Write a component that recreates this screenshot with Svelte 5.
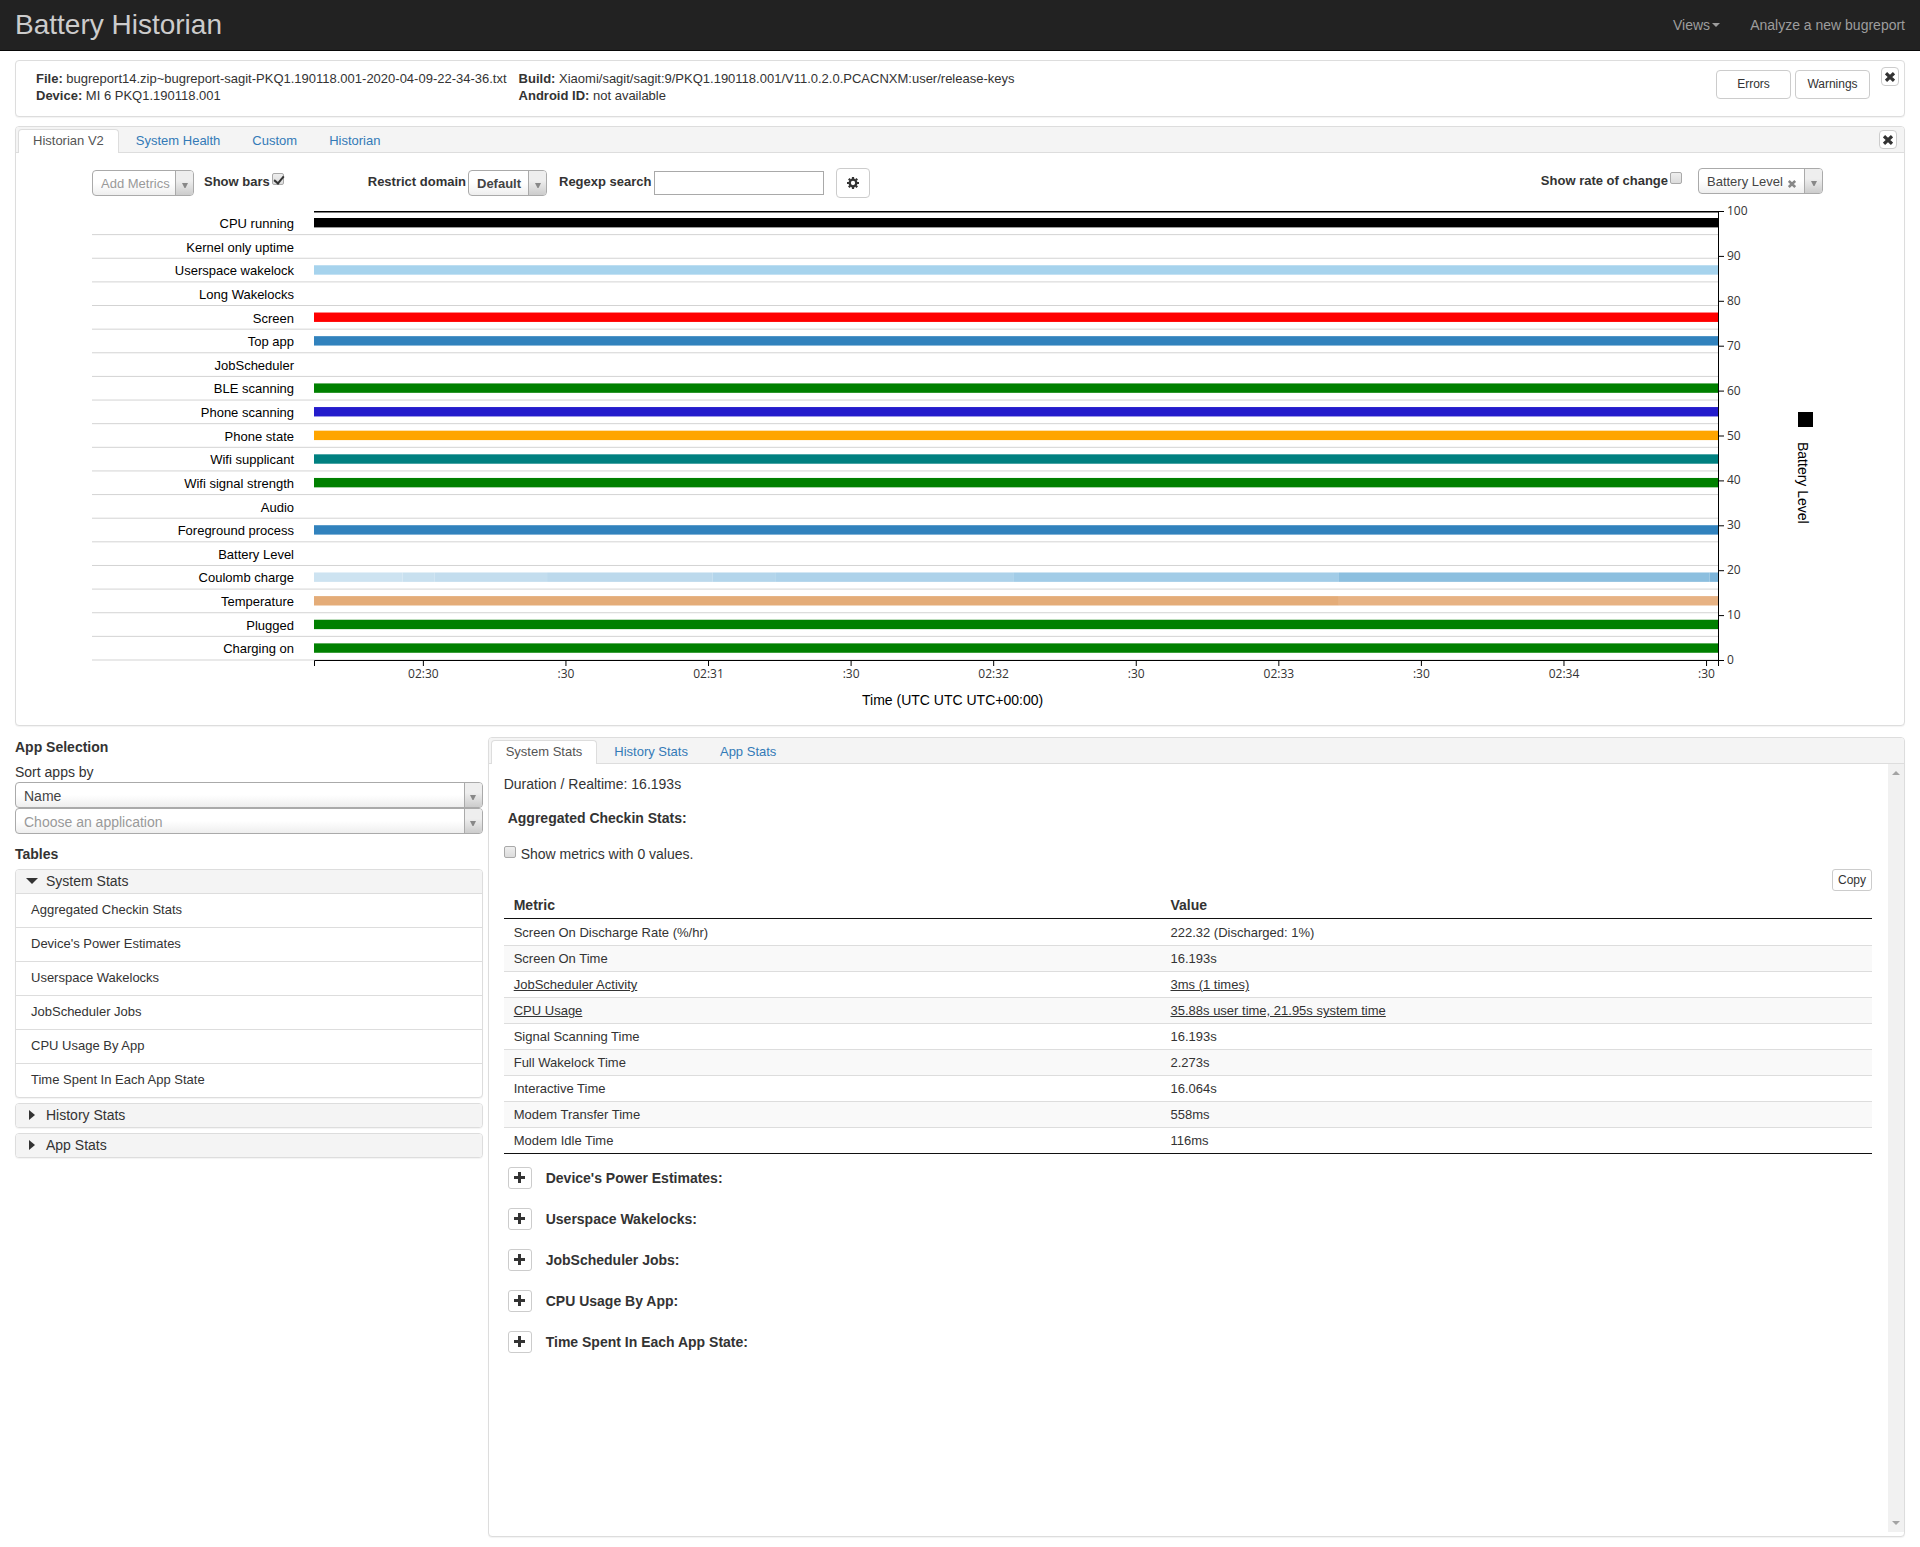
<script>
    let chartWidth = $state(1812);
    let showBars = $state(true);
    let showRate = $state(false);
    let showZero = $state(false);
    let regexp = $state('');
    let openGroup = $state('System Stats');

    const mainTabs = ['Historian V2', 'System Health', 'Custom', 'Historian'];
    const statTabs = ['System Stats', 'History Stats', 'App Stats'];

    // each segment is [start fraction, color]
    const rows = [
        { name: 'CPU running', segments: [[0, '#000']] },
        { name: 'Kernel only uptime', segments: [] },
        { name: 'Userspace wakelock', segments: [[0, '#a6d3ed']] },
        { name: 'Long Wakelocks', segments: [] },
        { name: 'Screen', segments: [[0, '#f00']] },
        { name: 'Top app', segments: [[0, '#3182bd']] },
        { name: 'JobScheduler', segments: [] },
        { name: 'BLE scanning', segments: [[0, 'green']] },
        { name: 'Phone scanning', segments: [[0, '#241ccc']] },
        { name: 'Phone state', segments: [[0, 'orange']] },
        { name: 'Wifi supplicant', segments: [[0, 'teal']] },
        { name: 'Wifi signal strength', segments: [[0, 'green']] },
        { name: 'Audio', segments: [] },
        { name: 'Foreground process', segments: [[0, '#3182bd']] },
        { name: 'Battery Level', segments: [] },
        { name: 'Coulomb charge', segments: [
            [0, '#cde3f1'], [0.063, '#c8e0ef'], [0.086, '#c3ddee'], [0.166, '#bcd9ec'],
            [0.284, '#b3d5eb'], [0.329, '#add2ea'], [0.498, '#a2cce7'], [0.73, '#8cbfdf'], [0.994, '#7cb4d9'],
        ] },
        { name: 'Temperature', segments: [[0, '#e4ac78'], [0.73, '#e7b283']] },
        { name: 'Plugged', segments: [[0, 'green']] },
        { name: 'Charging on', segments: [[0, 'green']] },
    ];
    const levels = [0, 10, 20, 30, 40, 50, 60, 70, 80, 90, 100];
    const times = ['02:30', ':30', '02:31', ':30', '02:32', ':30', '02:33', ':30', '02:34', ':30'];

    const left = 222;
    const top = 13;
    const plotHeight = 449;
    const rowHeight = plotHeight / rows.length;
    let right = $derived(chartWidth - 186);
    let plotWidth = $derived(right - left);

    const levelY = (level) => top + plotHeight * (1 - level / 100);
    const timeX = (i) => left + plotWidth * (0.0779 + i * 0.10155);
    const segmentEnd = (segments, i) => i + 1 < segments.length ? segments[i + 1][0] : 1;

    const tables = [
        { name: 'System Stats', items: ['Aggregated Checkin Stats', "Device's Power Estimates", 'Userspace Wakelocks',
            'JobScheduler Jobs', 'CPU Usage By App', 'Time Spent In Each App State'] },
        { name: 'History Stats', items: [] },
        { name: 'App Stats', items: [] },
    ];

    const metrics = [
        { name: 'Screen On Discharge Rate (%/hr)', value: '222.32 (Discharged: 1%)' },
        { name: 'Screen On Time', value: '16.193s' },
        { name: 'JobScheduler Activity', value: '3ms (1 times)', link: true },
        { name: 'CPU Usage', value: '35.88s user time, 21.95s system time', link: true },
        { name: 'Signal Scanning Time', value: '16.193s' },
        { name: 'Full Wakelock Time', value: '2.273s' },
        { name: 'Interactive Time', value: '16.064s' },
        { name: 'Modem Transfer Time', value: '558ms' },
        { name: 'Modem Idle Time', value: '116ms' },
    ];
    const sections = ["Device's Power Estimates:", 'Userspace Wakelocks:', 'JobScheduler Jobs:', 'CPU Usage By App:',
        'Time Spent In Each App State:'];
</script>

{#snippet cross(size)}
    <svg width={size} height={size} viewBox="0 0 10 10" aria-hidden="true">
        <path d="M1 1.2L9 8.8M9 1.2L1 8.8" stroke="currentColor" stroke-width="3.2" />
    </svg>
{/snippet}

{#snippet arrow()}
    <span class="arrow">
        <svg width="6" height="5" viewBox="0 0 6 5" aria-hidden="true"><path d="M0 0H6L3.5 5H2.5Z" fill="#888" /></svg>
    </span>
{/snippet}

{#snippet tabBar(tabs)}
    <nav class="tabs">
        {#each tabs as tab, i}
            <a href="#{tab}" class:active={i === 0}>{tab}</a>
        {/each}
    </nav>
{/snippet}

<div class="page">
    <header class="navbar">
        <a class="brand" href="#top">Battery Historian</a>
        <nav>
            <button class="views">Views<span class="caret"></span></button>
            <a href="#upload">Analyze a new bugreport</a>
        </nav>
    </header>

    <main>
        <section class="panel info">
            <div class="info-text">
                <div><b>File:</b> bugreport14.zip~bugreport-sagit-PKQ1.190118.001-2020-04-09-22-34-36.txt</div>
                <div><b>Device:</b> MI 6 PKQ1.190118.001</div>
            </div>
            <div class="info-text">
                <div><b>Build:</b> Xiaomi/sagit/sagit:9/PKQ1.190118.001/V11.0.2.0.PCACNXM:user/release-keys</div>
                <div><b>Android ID:</b> not available</div>
            </div>
            <div class="info-buttons">
                <button class="btn wide">Errors</button>
                <button class="btn wide">Warnings</button>
            </div>
            <button class="btn close" aria-label="Close">{@render cross(10)}</button>
        </section>

        <section class="panel">
            <div class="panel-head">
                {@render tabBar(mainTabs)}
                <button class="btn close" aria-label="Close">{@render cross(10)}</button>
            </div>

            <div class="controls">
                <span class="select metrics">
                    <select class="placeholder" aria-label="Add Metrics"><option>Add Metrics</option></select>
                    {@render arrow()}
                </span>
                <label class="bars">Show bars <input type="checkbox" bind:checked={showBars}></label>
                <label for="domain">Restrict domain</label>
                <span class="select domain">
                    <select id="domain"><option>Default</option></select>
                    {@render arrow()}
                </span>
                <label for="regexp">Regexp search</label>
                <input id="regexp" type="text" bind:value={regexp}>
                <button class="btn gear" aria-label="Settings">
                    <svg width="12" height="12" viewBox="0 0 12 12" fill="none" stroke="currentColor" aria-hidden="true">
                        <circle cx="6" cy="6" r="3.3" stroke-width="2.3" />
                        <path d="M6 0V2M6 10V12M0 6H2M10 6H12M1.8 1.8L3.1 3.1M8.9 8.9L10.2 10.2M10.2 1.8L8.9 3.1M3.1 8.9L1.8 10.2" stroke-width="2.2" />
                    </svg>
                </button>
                <div class="controls-right">
                    <label>Show rate of change <input type="checkbox" bind:checked={showRate}></label>
                    <span class="select level">
                        <select aria-label="Level metric"><option>Battery Level</option></select>
                        <button class="clear" aria-label="Clear">{@render cross(8)}</button>
                        {@render arrow()}
                    </span>
                </div>
            </div>

            <div class="chart" bind:clientWidth={chartWidth}>
                <svg width={chartWidth} height="527">
                    {#each rows as row, i}
                        {@const y = top + i * rowHeight}
                        <line x1="0" x2={right} y1={y + rowHeight} y2={y + rowHeight} stroke="#d3d3d3" />
                        <text class="row-label" x={left - 20} y={y + 17}>{row.name}</text>
                        {#if showBars}
                            {#each row.segments as [start, color], s}
                                <rect x={left + start * plotWidth} y={y + 7} height="9.4" fill={color}
                                    width={(segmentEnd(row.segments, s) - start) * plotWidth} />
                            {/each}
                        {/if}
                    {/each}

                    <!-- battery level stays at 100 for the whole report -->
                    <rect x={left} y={top} width={plotWidth} height="1.5" />
                    <path class="axis" d="M{right + 0.5} {top}V{top + plotHeight + 6}" />
                    <path class="axis" d="M{left + 0.5} {top + plotHeight + 6}V{top + plotHeight + 0.5}H{right + 6}" />
                    {#each levels as level}
                        <line class="axis" x1={right} x2={right + 6} y1={levelY(level) + 0.5} y2={levelY(level) + 0.5} />
                        <text class="tick" x={right + 9} y={levelY(level) + 4}>{level}</text>
                    {/each}
                    {#each times as time, i}
                        <line class="axis" x1={timeX(i)} x2={timeX(i)} y1={top + plotHeight} y2={top + plotHeight + 6} />
                        <text class="tick time" x={timeX(i)} y={top + plotHeight + 18}>{time}</text>
                    {/each}

                    <text class="title" x={left + plotWidth / 2 - 154} y="507">Time (UTC UTC UTC+00:00)</text>
                    <rect x={right + 80} y="214" width="15" height="15" />
                    <text class="title" transform="translate({right + 80} 244) rotate(90)">Battery Level</text>
                </svg>
            </div>
        </section>

        <div class="columns">
            <aside>
                <h4>App Selection</h4>
                <label class="sort" for="sort">Sort apps by</label>
                <span class="select full">
                    <select id="sort"><option>Name</option></select>
                    {@render arrow()}
                </span>
                <span class="select full">
                    <select class="placeholder" aria-label="Application"><option>Choose an application</option></select>
                    {@render arrow()}
                </span>

                <h4 class="tables-title">Tables</h4>
                {#each tables as group}
                    <div class="panel group">
                        <button class="group-head" onclick={() => openGroup = group.name}>
                            <svg width="12" height="12" viewBox="0 0 12 12" fill="currentColor" aria-hidden="true">
                                <path d={openGroup === group.name ? 'M0 3H12L6 9Z' : 'M3 1L9 6L3 11Z'} />
                            </svg>
                            {group.name}
                        </button>
                        {#if openGroup === group.name}
                            {#each group.items as item}
                                <a href="#{item}">{item}</a>
                            {/each}
                        {/if}
                    </div>
                {/each}
            </aside>

            <section class="panel stats">
                <div class="panel-head">{@render tabBar(statTabs)}</div>
                <div class="stats-body">
                    <div class="stats-content">
                        <div>Duration / Realtime: 16.193s</div>
                        <h4 class="checkin">Aggregated Checkin Stats:</h4>
                        <label class="zero"><input type="checkbox" bind:checked={showZero}>Show metrics with 0 values.</label>
                        <button class="btn copy">Copy</button>
                        <table>
                            <thead>
                                <tr><th>Metric</th><th>Value</th></tr>
                            </thead>
                            <tbody>
                                {#each metrics as metric}
                                    <tr class:link={metric.link}><td>{metric.name}</td><td>{metric.value}</td></tr>
                                {/each}
                            </tbody>
                        </table>
                        <div class="sections">
                            {#each sections as section}
                                <div>
                                    <button class="btn plus" aria-label="Expand {section}">
                                        <svg width="12" height="12" viewBox="0 0 12 12" aria-hidden="true">
                                            <path d="M5.5 0V11M0 5.5H11" stroke="currentColor" stroke-width="3" />
                                        </svg>
                                    </button>
                                    <h4>{section}</h4>
                                </div>
                            {/each}
                        </div>
                    </div>
                    <div class="scrollbar">
                        <button aria-label="Scroll up"><svg width="8" height="4"><path d="M0 4H8L4 0Z" fill="#a3a3a3" /></svg></button>
                        <button aria-label="Scroll down"><svg width="8" height="4"><path d="M0 0H8L4 4Z" fill="#a3a3a3" /></svg></button>
                    </div>
                </div>
            </section>
        </div>
    </main>
</div>

<style>
    :global(body) { margin: 0; background: #fff; }

    .page {
        min-height: 100vh; display: flex; flex-direction: column; color: #333;
        font: 14px/20px "Liberation Sans", Arial, sans-serif;
    }
    .page, .page :global(*) { box-sizing: border-box; }
    a { color: inherit; text-decoration: none; }
    button, input, select { font: inherit; color: inherit; }
    button { padding: 0; border: 0; background: none; cursor: pointer; }
    svg { display: block; flex: none; }
    h4 { margin: 0; font-size: 14px; font-weight: bold; }

    .navbar {
        height: 51px; padding: 0 15px; background: #222; border-bottom: 1px solid #080808; color: #9d9d9d;
        display: flex; justify-content: space-between; align-items: center;
    }
    .brand { font-size: 28px; line-height: 32px; color: #ccc; }
    .navbar nav { display: flex; gap: 30px; }
    .views { display: flex; align-items: center; gap: 2px; }
    .caret { border: 4px solid transparent; border-top-color: currentColor; border-bottom: 0; }

    main { flex: 1; display: flex; flex-direction: column; padding: 9px 15px 10px; }
    .panel { border: 1px solid #ddd; border-radius: 4px; background: #fff; box-shadow: 0 1px 1px rgba(0, 0, 0, 0.05); }
    .btn {
        display: flex; align-items: center; justify-content: center; background: #fff;
        border: 1px solid #ccc; border-radius: 4px; font-size: 12px; line-height: 17px;
    }
    .close { width: 18px; height: 19px; }

    .info { display: flex; align-items: flex-start; padding: 6px 5px 12px 20px; margin-bottom: 9px; font-size: 13px; line-height: 17px; }
    .info-text { margin: 3px 12px 0 0; }
    .info-buttons { display: flex; gap: 4px; margin: 3px 11px 0 auto; }
    .wide { width: 75px; height: 29px; }

    .panel-head {
        display: flex; justify-content: space-between; align-items: center; height: 26px; padding: 0 7px 0 2px;
        background: #f4f4f4; border-bottom: 1px solid #ddd; border-radius: 3px 3px 0 0;
    }
    .tabs { align-self: flex-end; display: flex; gap: 2px; margin-bottom: -1px; font-size: 13px; line-height: 17px; }
    .tabs a { padding: 2px 14px 4px; border: 1px solid transparent; border-bottom: 0; border-radius: 4px 4px 0 0; color: #337ab7; }
    .tabs a.active { background: #fff; border-color: #ddd; color: #555; }

    .controls { display: flex; align-items: center; height: 45px; padding: 15px 81px 0 76px; font-size: 13px; font-weight: bold; }
    .controls label { display: flex; gap: 2px; padding-bottom: 3px; line-height: 17px; }
    .controls label[for] { margin-right: 2px; }
    .controls .bars { margin: 0 84px 0 10px; }
    .controls-right { margin-left: auto; display: flex; gap: 16px; height: 30px; }
    .controls-right label { padding-top: 4px; }

    .select {
        display: flex; height: 26px; border: 1px solid #aaa; border-radius: 4px; overflow: hidden;
        background: linear-gradient(to top, #eee 0%, #fff 50%); color: #444;
    }
    select { appearance: none; flex: 1; min-width: 0; padding: 2px 0 0 8px; border: 0; background: none; outline: 0; }
    .placeholder { color: #999; }
    .arrow {
        width: 18px; border-left: 1px solid #aaa; background: linear-gradient(to top, #ccc 0%, #eee 60%);
        display: flex; align-items: center; justify-content: center; padding-top: 4px; pointer-events: none;
    }
    .metrics { width: 102px; font-weight: normal; }
    .domain { width: 79px; margin-right: 12px; }
    .level { width: 125px; font-weight: normal; }
    .clear { padding: 5px 8px 0 0; color: #888; }
    .full { width: 100%; }

    input[type="text"] { width: 170px; height: 24px; padding: 0 4px; border: 1px solid #a9a9a9; margin-right: 12px; }
    input[type="checkbox"] {
        appearance: none; width: 12px; height: 12px; margin: 0; border: 1px solid #a9a9a9; border-radius: 2px;
        background: linear-gradient(#eee, #dcdcdc); position: relative;
    }
    input[type="checkbox"]:checked::after {
        content: ""; position: absolute; left: 3px; top: 0; width: 4px; height: 8px;
        border: solid #333; border-width: 0 2px 2px 0; transform: rotate(40deg);
    }
    .gear { width: 34px; height: 30px; }

    .chart { margin-left: 76px; overflow: hidden; }
    .row-label { font-size: 13px; text-anchor: end; fill: #000; }
    .tick { font: 12px "Open Sans", sans-serif; fill: #333; }
    .time { text-anchor: middle; }
    .title { font-size: 14px; fill: #000; }
    .axis { fill: none; stroke: #000; }

    .columns { flex: 1; display: grid; grid-template-columns: minmax(0, 33fr) minmax(0, 100fr); gap: 5px; margin-top: 11px; }
    .sort { display: block; margin-top: 5px; }
    .tables-title { margin: 10px 0 5px; }
    .group { margin-bottom: 5px; overflow: hidden; font-size: 13px; line-height: 17px; }
    .group-head {
        display: flex; align-items: center; gap: 8px; width: 100%; height: 23px; padding: 0 10px 2px;
        background: #f4f4f4; font-size: 14px; line-height: 20px;
    }
    .group a { display: block; padding: 7px 15px 9px; border-top: 1px solid #ddd; }

    .stats { display: flex; flex-direction: column; }
    .stats-body { flex: 1; display: flex; padding-bottom: 4px; }
    .stats-content { flex: 1; padding: 10px 16px 20px 15px; }
    .checkin { margin: 14px 4px 16px; }
    .zero { display: flex; gap: 5px; }
    .zero input { margin-top: 2px; }
    .copy { width: 40px; height: 22px; margin: 5px 0 0 auto; border-radius: 3px; }

    table { width: 100%; border-collapse: separate; border-spacing: 0; border-bottom: 1px solid #111; font-size: 13px; line-height: 17px; }
    th, td { padding: 4px 10px; text-align: left; }
    th { padding-bottom: 3px; border-bottom: 1px solid #111; font-size: 14px; line-height: 20px; }
    th:first-child { width: 48%; }
    td { border-top: 1px solid #ddd; }
    tr:first-child td { border-top-color: transparent; }
    tbody tr:nth-child(even) { background: #f9f9f9; }
    .link td { text-decoration: underline; }

    .sections { display: flex; flex-direction: column; gap: 19px; margin: 13px 4px 0; }
    .sections div { display: flex; align-items: center; gap: 14px; }
    .plus { width: 24px; height: 22px; border-radius: 3px; }

    .scrollbar { width: 16px; background: #f1f1f1; display: flex; flex-direction: column; justify-content: space-between; }
    .scrollbar button { display: flex; align-items: center; justify-content: center; height: 18px; }
</style>
